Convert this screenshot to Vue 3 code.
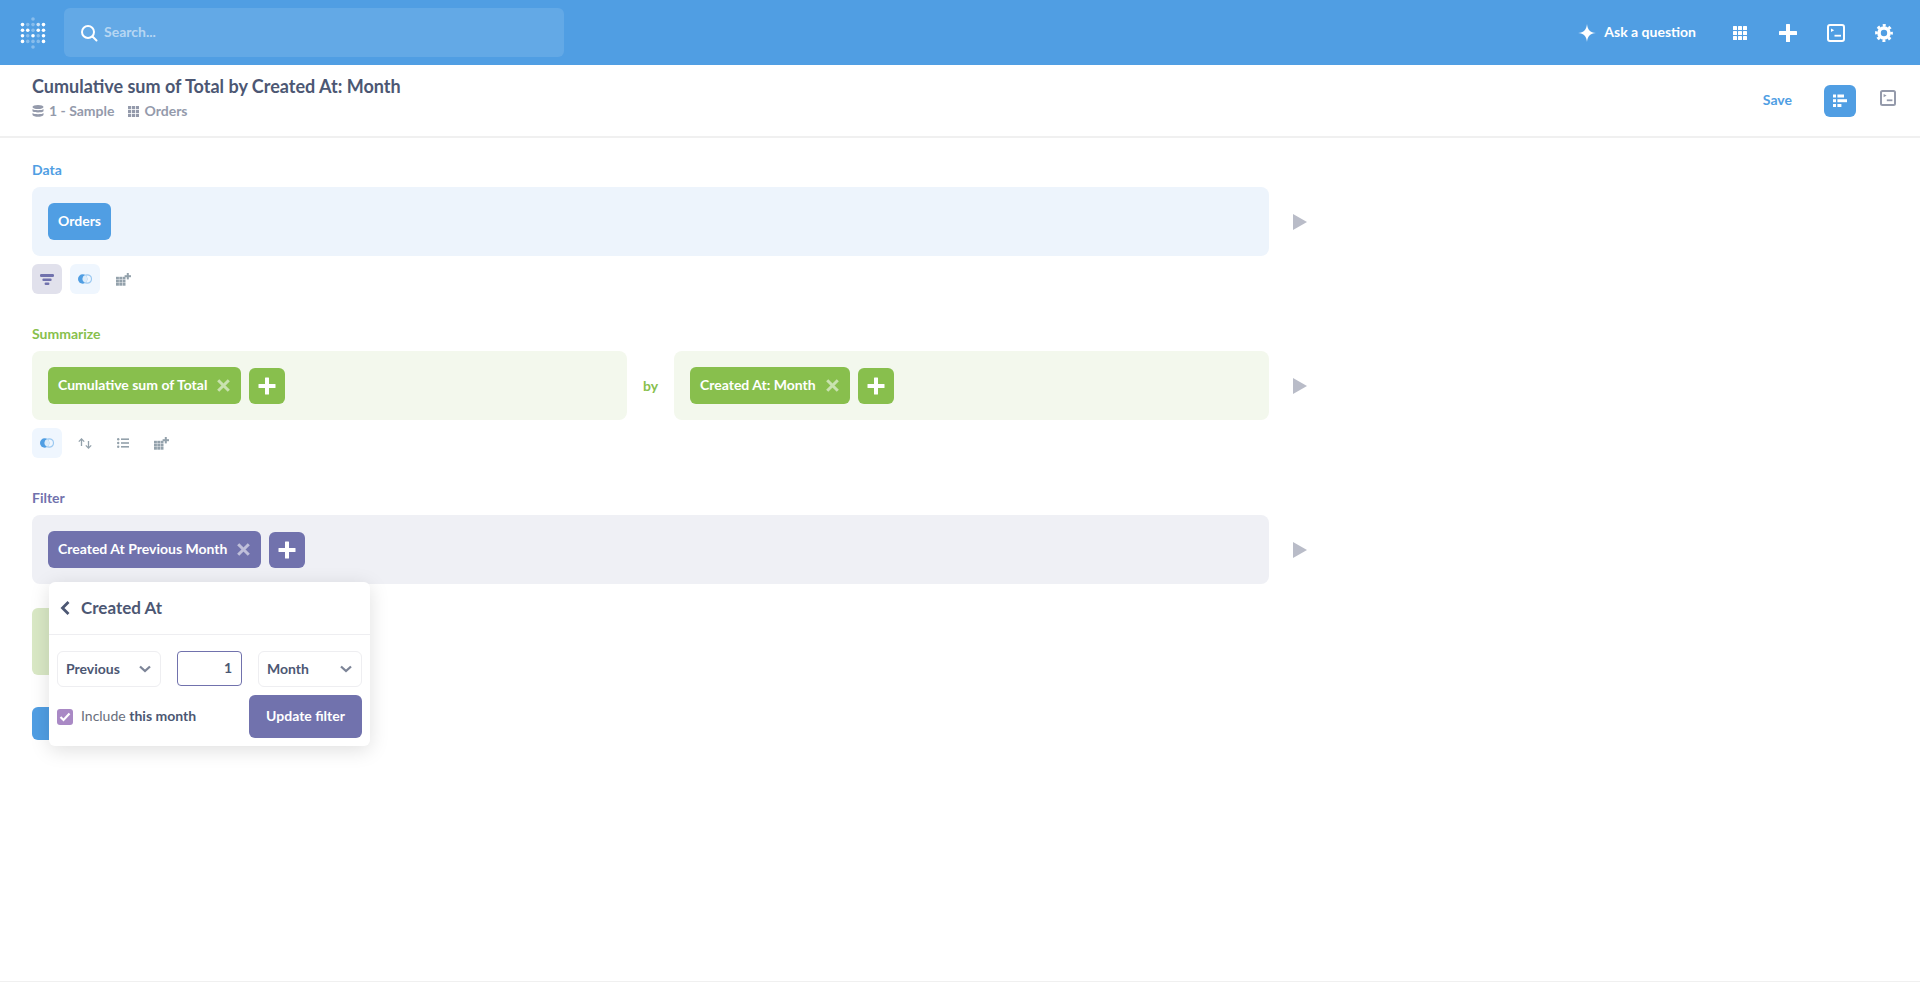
<script setup>
const logoDots = []
const rows = [
  [0, 0, 0, 0, 0],
  [1, 0, 0, 0.6, 1],
  [1, 1, 0, 1, 1],
  [1, 0, 1, 0, 1],
  [1, 0, 0, 0, 1],
  [0, 0, 0, 0, 0]
]
rows.forEach((row, r) => {
  row.forEach((v, c) => {
    const edge = r === 0 || r === 5
    if (edge && c !== 2) return
    logoDots.push({ x: 2 + c * 5.25, y: 2 + r * 5.6, o: v === 1 ? 1 : v === 0.6 ? 0.7 : 0.32 })
  })
})
const grid3 = [0, 1, 2].flatMap((r) => [0, 1, 2].map((c) => ({ x: c * 5, y: r * 5 })))
const tableCells = [0, 1, 2].flatMap((r) => [0, 1, 2].map((c) => ({ x: c * 3.3, y: 3.8 + r * 3.1 })))
</script>

<template>
  <div class="page">
    <header class="nav">
      <svg class="logo" width="26" height="32" viewBox="0 0 25 32">
        <circle v-for="(d, i) in logoDots" :key="i" :cx="d.x" :cy="d.y" r="1.8" fill="#fff" :opacity="d.o" />
      </svg>
      <div class="search">
        <svg width="18" height="18" viewBox="0 0 18 18" fill="none" stroke="#fff" stroke-width="2">
          <circle cx="8" cy="8" r="6" />
          <path d="M12.5 12.5 L16.5 16.5" stroke-linecap="round" />
        </svg>
        <span class="search-text">Search...</span>
      </div>
      <div class="nav-right">
        <div class="ask">
          <svg width="18" height="18" viewBox="0 0 18 18" fill="#fff">
            <path d="M9 0 C9.6 5.8 12 8.4 18 9 C12 9.6 9.6 12.2 9 18 C8.4 12.2 6 9.6 0 9 C6 8.4 8.4 5.8 9 0 Z" />
          </svg>
          <span class="ask-text">Ask a question</span>
        </div>
        <svg class="n-grid" width="14" height="14" viewBox="0 0 14 14" fill="#fff">
          <rect v-for="(g, i) in grid3" :key="i" :x="g.x" :y="g.y" width="4" height="4" rx="0.5" />
        </svg>
        <svg class="n-plus" width="18" height="18" viewBox="0 0 18 18" fill="#fff">
          <rect x="7" y="0" width="4" height="18" rx="0.5" />
          <rect x="0" y="7" width="18" height="4" rx="0.5" />
        </svg>
        <svg class="n-term" width="18" height="18" viewBox="0 0 18 18" fill="none" stroke="#fff">
          <rect x="1" y="1" width="16" height="16" rx="2" stroke-width="2" />
          <path d="M4 4.5 L7.2 6.3 L4 8.1 Z" fill="#fff" stroke="none" />
          <rect x="7.5" y="10.8" width="6.5" height="1.8" fill="#fff" stroke="none" />
        </svg>
        <svg class="n-gear" width="18" height="18" viewBox="0 0 18 18" fill="none" stroke="#fff">
          <circle cx="9" cy="9" r="5" stroke-width="3.6" />
          <circle cx="9" cy="9" r="7.6" stroke-width="2.6" stroke-dasharray="3 2.97" stroke-dashoffset="1.5" />
        </svg>
      </div>
    </header>

    <div class="sub">
      <div>
        <h1 class="title">Cumulative sum of Total by Created At: Month</h1>
        <div class="crumbs">
          <svg width="12" height="12" viewBox="0 0 12 12" fill="#949aab">
            <ellipse cx="6" cy="2" rx="5.5" ry="2" />
            <path d="M.5 4 C1.5 5.6 10.5 5.6 11.5 4 V6.2 C10.5 7.8 1.5 7.8 .5 6.2 Z" />
            <path d="M.5 8 C1.5 9.6 10.5 9.6 11.5 8 V10 C10.5 12.4 1.5 12.4 .5 10 Z" />
          </svg>
          <span class="crumb">1 - Sample</span>
          <svg class="crumb-grid" width="11" height="11" viewBox="0 0 14 14" fill="#949aab">
            <rect v-for="(g, i) in grid3" :key="i" :x="g.x" :y="g.y" width="4" height="4" />
          </svg>
          <span class="crumb">Orders</span>
        </div>
      </div>
      <div class="sub-right">
        <span class="save">Save</span>
        <div class="view-btn">
          <svg width="14" height="14" viewBox="0 0 14 14" fill="#fff">
            <rect x="0" y="0.5" width="3" height="3" />
            <rect x="4.4" y="0.5" width="6.6" height="3" />
            <rect x="0" y="5.2" width="3" height="3" />
            <rect x="4.4" y="5.2" width="9.6" height="3" />
            <rect x="0" y="10" width="3" height="3" />
            <rect x="4.4" y="10" width="4" height="3" />
          </svg>
        </div>
        <svg class="sub-term" width="16" height="16" viewBox="0 0 16 16" fill="none" stroke="#949aab">
          <rect x="1" y="1" width="14" height="14" rx="1.5" stroke-width="2" />
          <path d="M3.6 4 L6.6 5.6 L3.6 7.2 Z" fill="#949aab" stroke="none" />
          <rect x="6.8" y="9.4" width="5.6" height="1.8" fill="#949aab" stroke="none" />
        </svg>
      </div>
    </div>

    <main class="main">
      <section class="section">
        <div class="label blue-t">Data</div>
        <div class="row">
          <div class="box box-blue"><div class="pill blue">Orders</div></div>
          <svg class="run" width="14" height="16" viewBox="0 0 14 16" fill="#b9bcc8"><path d="M0 0 L14 8 L0 16 Z" /></svg>
        </div>
        <div class="actions">
          <div class="act act-filter">
            <svg width="14" height="11" viewBox="0 0 14 11" fill="#7172ad">
              <rect x="0" y="0" width="14" height="3" rx="1.2" />
              <rect x="2.4" y="4.5" width="9.2" height="2.5" rx="1" />
              <rect x="4.6" y="8.5" width="4.8" height="2.5" rx="1" />
            </svg>
          </div>
          <div class="act act-join">
            <svg width="14" height="10" viewBox="0 0 14 10">
              <circle cx="9.3" cy="5" r="4.2" fill="none" stroke="#9cc9f1" stroke-width="1.2" />
              <circle cx="4.7" cy="5" r="4.7" fill="#509ee3" />
              <path d="M7.1 1 A4.3 4.3 0 0 0 7.1 9 A4.7 4.7 0 0 0 7.1 1 Z" fill="#fff" opacity="0.8" />
            </svg>
          </div>
          <div class="act">
            <svg width="15" height="13" viewBox="0 0 15 13" fill="#93a1ab">
              <rect v-for="(g, i) in tableCells" :key="i" :x="g.x" :y="g.y" width="2.9" height="2.7" />
              <rect x="10.8" y="0" width="2" height="6.4" />
              <rect x="8.6" y="2.2" width="6.4" height="2" />
            </svg>
          </div>
        </div>
      </section>

      <section class="section">
        <div class="label green-t">Summarize</div>
        <div class="row">
          <div class="box box-green box-left">
            <div class="pill green"><span>Cumulative sum of Total</span><span class="x">
              <svg width="13" height="13" viewBox="0 0 13 13" stroke="#fff" stroke-width="3"><path d="M1.2 1.2 L11.8 11.8 M11.8 1.2 L1.2 11.8" /></svg>
            </span></div>
            <div class="add green">
              <svg width="18" height="18" viewBox="0 0 18 18" fill="#fff"><rect x="7" y=".5" width="4" height="17" rx="0.5" /><rect x=".5" y="7" width="17" height="4" rx="0.5" /></svg>
            </div>
          </div>
          <div class="by">by</div>
          <div class="box box-green box-right">
            <div class="pill green"><span>Created At: Month</span><span class="x">
              <svg width="13" height="13" viewBox="0 0 13 13" stroke="#fff" stroke-width="3"><path d="M1.2 1.2 L11.8 11.8 M11.8 1.2 L1.2 11.8" /></svg>
            </span></div>
            <div class="add green">
              <svg width="18" height="18" viewBox="0 0 18 18" fill="#fff"><rect x="7" y=".5" width="4" height="17" rx="0.5" /><rect x=".5" y="7" width="17" height="4" rx="0.5" /></svg>
            </div>
          </div>
          <svg class="run" width="14" height="16" viewBox="0 0 14 16" fill="#b9bcc8"><path d="M0 0 L14 8 L0 16 Z" /></svg>
        </div>
        <div class="actions">
          <div class="act act-join">
            <svg width="14" height="10" viewBox="0 0 14 10">
              <circle cx="9.3" cy="5" r="4.2" fill="none" stroke="#9cc9f1" stroke-width="1.2" />
              <circle cx="4.7" cy="5" r="4.7" fill="#509ee3" />
              <path d="M7.1 1 A4.3 4.3 0 0 0 7.1 9 A4.7 4.7 0 0 0 7.1 1 Z" fill="#fff" opacity="0.8" />
            </svg>
          </div>
          <div class="act">
            <svg width="14" height="11" viewBox="0 0 14 11" fill="none" stroke="#93a1ab" stroke-width="1.3">
              <path d="M3.5 8 V1 M.8 3.6 L3.5 .9 L6.2 3.6" />
              <path d="M10.5 3 V10 M7.8 7.4 L10.5 10.1 L13.2 7.4" />
            </svg>
          </div>
          <div class="act">
            <svg width="12" height="10" viewBox="0 0 12 10" fill="#93a1ab">
              <circle cx="1.2" cy="1.2" r="1.2" /><circle cx="1.2" cy="5" r="1.2" /><circle cx="1.2" cy="8.8" r="1.2" />
              <rect x="4" y="0.4" width="8" height="1.6" /><rect x="4" y="4.2" width="8" height="1.6" /><rect x="4" y="8" width="8" height="1.6" />
            </svg>
          </div>
          <div class="act">
            <svg width="15" height="13" viewBox="0 0 15 13" fill="#93a1ab">
              <rect v-for="(g, i) in tableCells" :key="i" :x="g.x" :y="g.y" width="2.9" height="2.7" />
              <rect x="10.8" y="0" width="2" height="6.4" />
              <rect x="8.6" y="2.2" width="6.4" height="2" />
            </svg>
          </div>
        </div>
      </section>

      <section class="section section-filter">
        <div class="label purple-t">Filter</div>
        <div class="row">
          <div class="box box-purple">
            <div class="pill purple"><span>Created At Previous Month</span><span class="x">
              <svg width="13" height="13" viewBox="0 0 13 13" stroke="#fff" stroke-width="3"><path d="M1.2 1.2 L11.8 11.8 M11.8 1.2 L1.2 11.8" /></svg>
            </span></div>
            <div class="add purple">
              <svg width="18" height="18" viewBox="0 0 18 18" fill="#fff"><rect x="7" y=".5" width="4" height="17" rx="0.5" /><rect x=".5" y="7" width="17" height="4" rx="0.5" /></svg>
            </div>
          </div>
          <svg class="run" width="14" height="16" viewBox="0 0 14 16" fill="#b9bcc8"><path d="M0 0 L14 8 L0 16 Z" /></svg>
        </div>

        <div class="popover">
          <div class="pop-head">
            <svg width="10" height="14" viewBox="0 0 10 14" fill="none" stroke="#4c5773" stroke-width="2.8"><path d="M8.5 1 L2.5 7 L8.5 13" /></svg>
            <span class="pop-title">Created At</span>
          </div>
          <div class="pop-fields">
            <div class="select"><span class="sel-text">Previous</span>
              <svg width="12" height="8" viewBox="0 0 12 8" fill="none" stroke="#7c8497" stroke-width="2.3"><path d="M1 1.5 L6 6 L11 1.5" /></svg>
            </div>
            <div class="num">1</div>
            <div class="select"><span class="sel-text">Month</span>
              <svg width="12" height="8" viewBox="0 0 12 8" fill="none" stroke="#7c8497" stroke-width="2.3"><path d="M1 1.5 L6 6 L11 1.5" /></svg>
            </div>
          </div>
          <div class="pop-foot">
            <div class="check">
              <svg width="12" height="10" viewBox="0 0 12 10" fill="none" stroke="#fff" stroke-width="2.2"><path d="M1.5 5 L4.5 8 L10.5 1.5" /></svg>
            </div>
            <span class="inc">Include <b>this month</b></span>
            <div class="update">Update filter</div>
          </div>
        </div>
      </section>

      <div class="ghost-green"></div>
      <div class="ghost-blue"></div>
    </main>
  </div>
</template>

<style>
html, body { margin: 0; background: #fff; }
</style>

<style scoped>
.page {
  height: 982px;
  box-sizing: border-box;
  border-bottom: 1px solid #f0f0f0;
  overflow: hidden;
  font-family: Lato, "Liberation Sans", sans-serif;
  color: #4c5773;
  background: #fff;
}
.nav {
  height: 65px;
  background: #509ee3;
  display: flex;
  align-items: center;
  padding: 0 27px 0 20px;
  box-sizing: border-box;
}
.logo { margin-right: 18px; flex: none; }
.search {
  width: 500px;
  height: 49px;
  background: rgba(255, 255, 255, 0.115);
  border-radius: 6px;
  display: flex;
  align-items: center;
  padding-left: 16px;
  box-sizing: border-box;
}
.search-text {
  color: rgba(255, 255, 255, 0.55);
  font-size: 14px;
  font-weight: 700;
  margin-left: 6px;
  padding-bottom: 2px;
}
.nav-right { margin-left: auto; display: flex; align-items: center; }
.ask {
  display: flex;
  align-items: center;
  color: #fff;
  font-size: 14px;
  font-weight: 700;
  gap: 8px;
  margin-right: 37px;
}
.ask-text { padding-bottom: 2px; }
.n-plus { margin-left: 32px; }
.n-term { margin-left: 30px; }
.n-gear { margin-left: 30px; }
.sub {
  height: 73px;
  box-sizing: border-box;
  border-bottom: 2px solid #f0f0f0;
  padding: 10px 24px 0 32px;
  display: flex;
  justify-content: space-between;
}
.title {
  margin: 0;
  font-size: 18px;
  line-height: 22px;
  font-weight: 700;
  color: #4c5773;
}
.crumbs {
  display: flex;
  align-items: center;
  margin-top: 5px;
  font-size: 14px;
  font-weight: 700;
  color: #949aab;
  line-height: 18px;
}
.crumb { margin-left: 5px; }
.crumb-grid { margin-left: 14px; }
.sub-right { display: flex; align-items: flex-start; }
.save {
  color: #509ee3;
  font-size: 14px;
  font-weight: 700;
  margin-top: 16px;
  margin-right: 32px;
}
.view-btn {
  width: 32px;
  height: 32px;
  background: #509ee3;
  border-radius: 6px;
  display: flex;
  align-items: center;
  justify-content: center;
  margin-top: 10px;
  margin-right: 24px;
}
.sub-term { margin-top: 15px; }
.main { padding: 23px 32px 0; position: relative; }
.section { margin-bottom: 31px; position: relative; }
.section-filter { margin-bottom: 24px; }
.label {
  font-size: 14px;
  font-weight: 700;
  line-height: 18px;
  margin-bottom: 8px;
}
.blue-t { color: #509ee3; }
.green-t { color: #88bf4d; }
.purple-t { color: #7172ad; }
.row { display: flex; align-items: center; width: 1275px; }
.box {
  width: 1237px;
  height: 69px;
  border-radius: 8px;
  box-sizing: border-box;
  padding: 16px;
  display: flex;
  align-items: flex-start;
  gap: 8px;
  flex: none;
}
.box-blue { background: #edf4fc; }
.box-green { background: #f3f8ed; }
.box-purple { background: #eff0f5; }
.box-left { width: 595px; }
.box-right { width: 595px; }
.by {
  width: 47px;
  flex: none;
  text-align: center;
  color: #88bf4d;
  font-size: 14px;
  font-weight: 700;
  padding-bottom: 1px;
}
.run { margin-left: 24px; flex: none; }
.pill {
  height: 37px;
  box-sizing: border-box;
  padding: 0 10px 2px;
  border-radius: 6px;
  color: #fff;
  font-size: 14px;
  font-weight: 700;
  display: flex;
  align-items: center;
  flex: none;
}
.blue { background: #509ee3; }
.green { background: #88bf4d; }
.purple { background: #7172ad; }
.x { display: flex; margin: 2px 1px 0 10px; opacity: 0.55; }
.add {
  width: 36px;
  height: 36px;
  border-radius: 6px;
  display: flex;
  align-items: center;
  justify-content: center;
  margin-top: 1px;
  flex: none;
}
.actions { display: flex; gap: 8px; margin-top: 8px; }
.act {
  width: 30px;
  height: 30px;
  border-radius: 6px;
  display: flex;
  align-items: center;
  justify-content: center;
}
.act-filter { background: #e1e1ec; }
.act-join { background: #eff6fe; }
.popover {
  position: absolute;
  left: 17px;
  top: 93px;
  width: 321px;
  height: 164px;
  background: #fff;
  border-radius: 6px;
  box-shadow: 0 4px 20px rgba(0, 0, 0, 0.13);
  z-index: 2;
  box-sizing: border-box;
}
.pop-head {
  height: 53px;
  border-bottom: 1px solid #eeeef1;
  display: flex;
  align-items: center;
  padding-left: 11px;
  gap: 11px;
  box-sizing: border-box;
  color: #4c5773;
}
.pop-title { font-size: 17px; font-weight: 700; padding-bottom: 2px; }
.pop-fields {
  display: flex;
  gap: 16px;
  padding: 16px 8px 0;
}
.select {
  width: 104px;
  height: 36px;
  border: 1px solid #eeeef1;
  border-radius: 6px;
  box-sizing: border-box;
  display: flex;
  align-items: center;
  justify-content: space-between;
  padding: 0 9px 0 8px;
  font-size: 14px;
  font-weight: 700;
}
.sel-text { padding-bottom: 2px; }
.num {
  width: 65px;
  height: 35px;
  border: 1px solid #7172ad;
  border-radius: 4px;
  box-sizing: border-box;
  text-align: right;
  padding-right: 9px;
  line-height: 32px;
  font-size: 14px;
  font-weight: 700;
}
.pop-foot {
  display: flex;
  align-items: center;
  padding: 8px 8px 0;
}
.check {
  width: 16px;
  height: 16px;
  border-radius: 3px;
  background: #a989c5;
  display: flex;
  align-items: center;
  justify-content: center;
}
.inc {
  margin-left: 8px;
  font-size: 14px;
  color: #696e7b;
  padding-bottom: 2px;
}
.inc b { color: #4c5773; font-weight: 700; }
.update {
  margin-left: auto;
  width: 113px;
  height: 43px;
  background: #7172ad;
  border-radius: 6px;
  color: #fff;
  font-size: 14px;
  font-weight: 700;
  display: flex;
  align-items: center;
  justify-content: center;
  padding-bottom: 2px;
  box-sizing: border-box;
}
.ghost-green {
  width: 120px;
  height: 67px;
  background: #d9e8c5;
  border-radius: 6px;
}
.ghost-blue {
  width: 130px;
  height: 33px;
  background: #509ee3;
  border-radius: 6px;
  margin-top: 32px;
}
</style>
